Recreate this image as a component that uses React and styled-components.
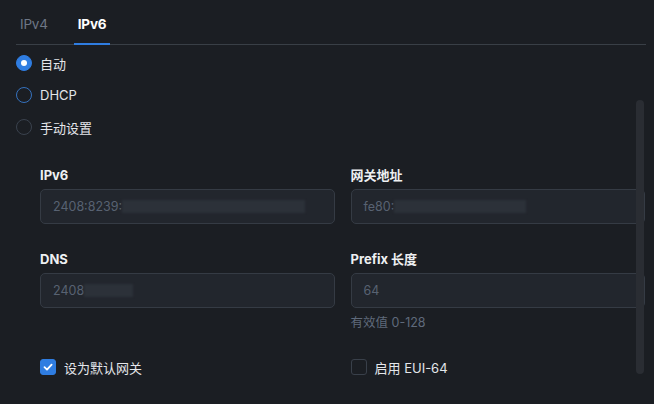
import React, { useState } from "react";
import styled, { createGlobalStyle } from "styled-components";

const Color = {
  bg: "#1b1e23",
  text: "#e4e6ea",
  muted: "#6e7786",
  hint: "#5f6a7b",
  blue: "#2f7de1",
  divider: "#393f46",
  inputBg: "#22262d",
  inputBorder: "#353b44",
  inputText: "#586272",
  redact: "#2c3139",
  scroll: "#2a2d33",
};

const GlobalStyle = createGlobalStyle`
  html, body {
    margin: 0;
    padding: 0;
    background: ${Color.bg};
    width: 654px;
    height: 404px;
    overflow: hidden;
  }
  body {
    font-family: Inter, "Noto Sans CJK SC", sans-serif;
    color: ${Color.text};
  }
`;

const Page = styled.div`
  position: relative;
  width: 654px;
  height: 404px;
  box-sizing: border-box;
  padding: 0 8px 0 16px;
`;

const Tabs = styled.div`
  display: flex;
  height: 44px;
  border-bottom: 1px solid ${Color.divider};
`;

const Tab = styled.div`
  position: relative;
  display: flex;
  align-items: center;
  padding: 4px 4px 0;
  margin-right: 22px;
  font-size: 13.5px;
  letter-spacing: -0.2px;
  font-weight: ${(p) => (p.$active ? 700 : 400)};
  color: ${(p) => (p.$active ? "#ffffff" : Color.muted)};
  cursor: pointer;

  &::after {
    content: "";
    display: ${(p) => (p.$active ? "block" : "none")};
    position: absolute;
    left: 0;
    right: 0;
    bottom: -1px;
    height: 2px;
    background: ${Color.blue};
  }
`;

const RadioList = styled.div`
  display: flex;
  flex-direction: column;
  padding-top: 2px;
`;

const RadioRow = styled.label`
  display: flex;
  align-items: center;
  height: 32px;
  gap: 8px;
  font-size: 13px;
  cursor: pointer;
`;

const RadioDot = styled.span`
  width: 16px;
  height: 16px;
  box-sizing: border-box;
  border-radius: 50%;
  border: 1.5px solid
    ${(p) => (p.$checked ? Color.blue : p.$hover ? "#3571bd" : "#3a424e")};
  background: ${(p) => (p.$checked ? Color.blue : "transparent")};
  display: flex;
  align-items: center;
  justify-content: center;

  &::after {
    content: "";
    display: ${(p) => (p.$checked ? "block" : "none")};
    width: 6px;
    height: 6px;
    border-radius: 50%;
    background: #ffffff;
  }
`;

const Grid = styled.div`
  display: grid;
  grid-template-columns: 1fr 1fr;
  column-gap: 16px;
  row-gap: 26px;
  margin: 23px 0 0 24px;
  width: 605px;
`;

const Field = styled.div`
  display: flex;
  flex-direction: column;
`;

const Label = styled.div`
  font-size: 13px;
  font-weight: 700;
  line-height: 18px;
  color: #eef0f2;
  margin-bottom: 5px;
`;

const Input = styled.div`
  height: 35px;
  box-sizing: border-box;
  border: 1px solid ${Color.inputBorder};
  border-radius: 5px;
  background: ${Color.inputBg};
  padding: 0 12px;
  display: flex;
  align-items: center;
  font-size: 12.5px;
  color: ${Color.inputText};
`;

const Redact = styled.span`
  display: inline-block;
  height: 13px;
  width: ${(p) => p.$w}px;
  background: ${Color.redact};
  filter: blur(0.8px);
`;

const Hint = styled.div`
  font-size: 12.5px;
  line-height: 16px;
  margin-top: 7px;
  color: ${Color.hint};
`;

const CheckRow = styled.label`
  display: flex;
  align-items: center;
  gap: 8px;
  height: 20px;
  font-size: 13px;
  cursor: pointer;
`;

const Box = styled.span`
  width: 16px;
  height: 16px;
  box-sizing: border-box;
  border-radius: 3px;
  border: 1px solid ${(p) => (p.$checked ? Color.blue : "#39404a")};
  background: ${(p) => (p.$checked ? Color.blue : "transparent")};
  display: flex;
  align-items: center;
  justify-content: center;
`;

const Scrollbar = styled.div`
  position: absolute;
  left: 636px;
  top: 100px;
  width: 8px;
  height: 274px;
  border-radius: 4px;
  background: ${Color.scroll};
`;

const Check = () => (
  <svg width="10" height="10" viewBox="0 0 10 10">
    <path
      d="M1.5 5.2 L4 7.6 L8.6 2.6"
      fill="none"
      stroke="#fff"
      strokeWidth="1.8"
      strokeLinecap="round"
      strokeLinejoin="round"
    />
  </svg>
);

const modes = ["自动", "DHCP", "手动设置"];

const App = () => {
  const [mode, setMode] = useState(0);
  const [gateway, setGateway] = useState(true);
  const [eui, setEui] = useState(false);

  return (
    <>
      <GlobalStyle />
      <Page>
        <Tabs>
          <Tab>IPv4</Tab>
          <Tab $active>IPv6</Tab>
        </Tabs>
        <RadioList>
          {modes.map((m, i) => (
            <RadioRow key={m} onClick={() => setMode(i)}>
              <RadioDot $checked={mode === i} $hover={i === 1} />
              {m}
            </RadioRow>
          ))}
        </RadioList>
        <Grid>
          <Field>
            <Label>IPv6</Label>
            <Input>
              2408:8239:<Redact $w={183} />
            </Input>
          </Field>
          <Field>
            <Label>网关地址</Label>
            <Input>
              fe80:<Redact $w={132} />
            </Input>
          </Field>
          <Field>
            <Label>DNS</Label>
            <Input>
              2408<Redact $w={49} />
            </Input>
          </Field>
          <Field>
            <Label>Prefix 长度</Label>
            <Input>64</Input>
            <Hint>有效值 0-128</Hint>
          </Field>
          <CheckRow onClick={() => setGateway(!gateway)}>
            <Box $checked={gateway}>{gateway && <Check />}</Box>
            设为默认网关
          </CheckRow>
          <CheckRow onClick={() => setEui(!eui)}>
            <Box $checked={eui}>{eui && <Check />}</Box>
            启用 EUI-64
          </CheckRow>
        </Grid>
        <Scrollbar />
      </Page>
    </>
  );
};

export default App;
